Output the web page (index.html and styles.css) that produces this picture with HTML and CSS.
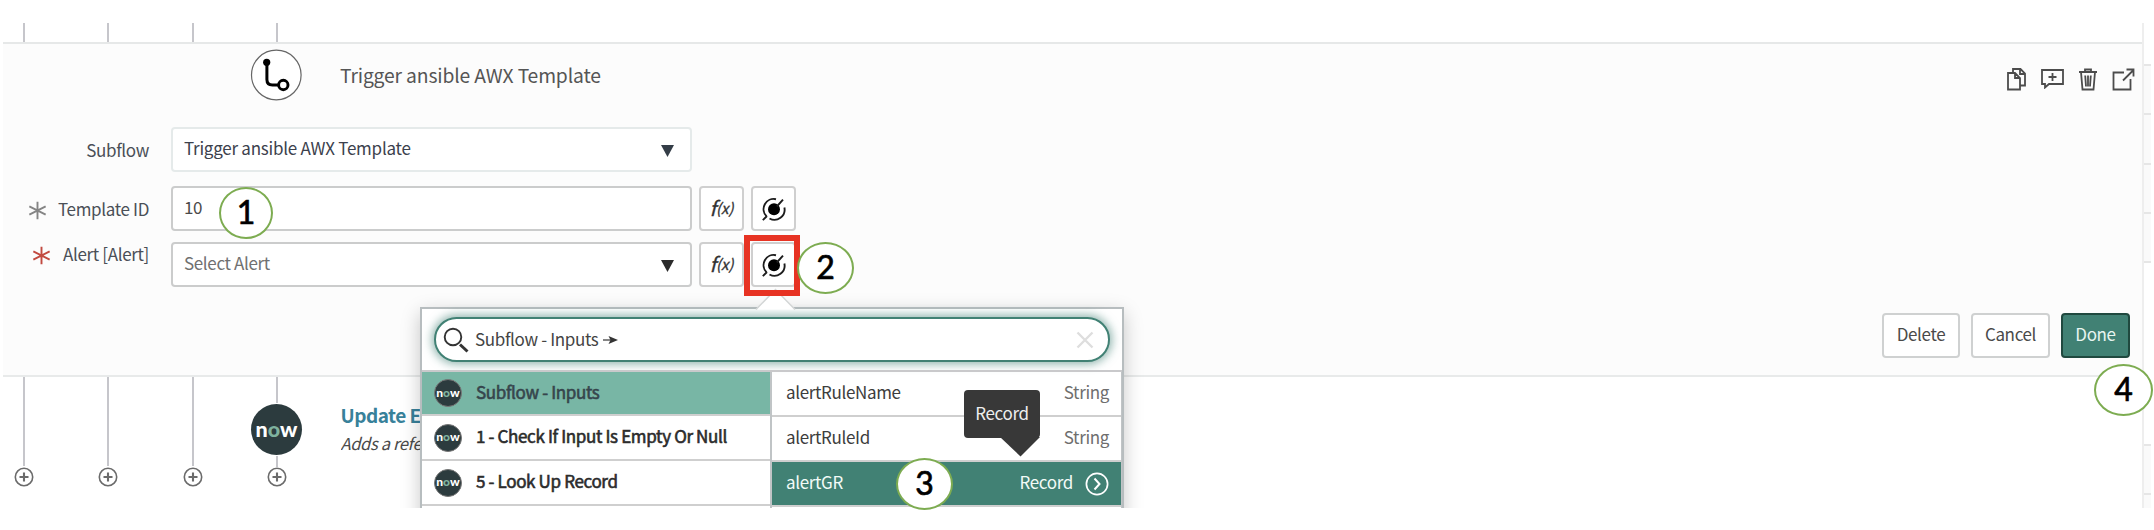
FILE: index.html
```html
<!DOCTYPE html>
<html lang="en">
<head>
<meta charset="utf-8">
<title>Flow Designer</title>
<link rel="stylesheet" href="styles.css">
</head>
<body>
<svg class="defs" width="0" height="0">
  <symbol id="pill" viewBox="0 0 24 24">
    <circle cx="12" cy="12.3" r="6" fill="#000"/>
    <path d="M14 2.2A10.2 10.2 0 0 0 4.6 19.4M22.4 10.500A10.2 10.2 0 0 1 7.500 21.500M14.8 9.5L21 2.6M.8 23.2L5 19" fill="none" stroke="#1c1c1c" stroke-width="1.9"/>
  </symbol>
  <symbol id="star" viewBox="0 0 20 20">
    <path d="M10 .8V19.2M1.4 5.6L18.6 14.4M1.4 14.4L18.6 5.6" fill="none" stroke="currentColor" stroke-width="2"/>
  </symbol>
  <symbol id="plus" viewBox="0 0 20 20">
    <circle cx="10" cy="10" r="8.7" fill="#fff" stroke="#6b6b6b" stroke-width="1.6"/>
    <path d="M10 5.5V14.5M5.5 10H14.5" stroke="#6b6b6b" stroke-width="2.1"/>
  </symbol>
</svg>
<main class="page">
  <div class="rails rails-top"><i></i><i></i><i></i><i></i></div>
  <section class="panel">
    <header class="head">
      <span class="flow-icon"><svg width="52" height="52" viewBox="0 0 52 52"><circle cx="26.300" cy="26" r="24.800" fill="#fff" stroke="#666" stroke-width="1.2"/><circle cx="16.7" cy="13.3" r="3.6"/><path d="M16.900 13V30.500Q16.900 36 22.400 36H28" fill="none" stroke="#000" stroke-width="3"/><circle cx="33.300" cy="36" r="4.700" fill="#fff" stroke="#000" stroke-width="2.900"/></svg></span>
      <h1 class="title">Trigger ansible AWX Template</h1>
      <div class="tools">
        <svg width="20" height="23" viewBox="0 0 20 23"><path d="M1 5H8L13 10V21.500H1ZM8 5V10H13M6 4.500V1H13.500L18 5.500V17.500H13.500M13 1.500V6H17.500" /></svg>
        <svg class="chat" width="23" height="20" viewBox="0 0 23 20"><path d="M1 1H22V15H8L4 18.500V15H1ZM11.500 4V12M7.500 8H15.500"/></svg>
        <svg width="20" height="23" viewBox="0 0 20 23"><path d="M1 4H19M7 4V1.500H13V4M3 4L4.500 21.500H15.500L17 4M7.200 7.500L8 18.500M10 7.500V18.500M12.800 7.500L12 18.500"/></svg>
        <svg width="23" height="23" viewBox="0 0 23 23"><path d="M12 4.500H1.500V21.500H18.500V11M11 12.500L21.500 2M14.500 1.500H21.500V8.500"/></svg>
      </div>
    </header>
    <div class="form">
      <div class="row row-sub"><label>Subflow</label><div class="field light dark">Trigger ansible AWX Template<b class="caret"></b></div></div>
      <div class="row row-id"><svg class="star" width="19" height="19"><use href="#star"/></svg><label>Template ID</label><div class="field">10</div><span class="btn fx">f<small>(x)</small></span><span class="btn"><svg width="24" height="24"><use href="#pill"/></svg></span></div>
      <div class="row row-alert"><svg class="star red" width="19" height="19"><use href="#star"/></svg><label>Alert [Alert]</label><div class="field ph">Select Alert<b class="caret black"></b></div><span class="btn fx">f<small>(x)</small></span><span class="btn"><svg width="24" height="24"><use href="#pill"/></svg></span></div>
    </div>
    <footer class="actions"><button class="b-del">Delete</button><button class="b-can">Cancel</button><button class="done">Done</button></footer>
  </section>
  <section class="next">
    <div class="col"><i></i><svg width="20" height="20"><use href="#plus"/></svg></div>
    <div class="col"><i></i><svg width="20" height="20"><use href="#plus"/></svg></div>
    <div class="col"><i></i><svg width="20" height="20"><use href="#plus"/></svg></div>
    <div class="col node"><i class="s1"></i><span class="now">n<em>o</em>w</span><i class="s2"></i><svg width="20" height="20"><use href="#plus"/></svg></div>
    <div class="step"><strong>Update E</strong><p>Adds a refe</p></div>
  </section>
  <aside class="side"><i class="blank"></i><i></i><i></i><i></i><i></i><i class="blank tall"></i><i></i></aside>

  <div class="clip"><div class="picker">
    <svg class="notch" width="42" height="22" viewBox="0 0 42 22"><path d="M1 21.500L20.500 1.500L40 21.500" fill="#fff" stroke="#d3d6d6" stroke-width="1.500"/></svg>
    <div class="search">
      <svg width="26" height="26" viewBox="0 0 26 26"><circle cx="10" cy="10" r="8.300" fill="none" stroke="#333" stroke-width="1.900"/><path d="M17 17.500L24.500 24.500" stroke="#333" stroke-width="3"/></svg>
      <span class="q">Subflow - Inputs</span>
      <svg class="arrow" width="15" height="8" viewBox="0 0 15 8"><path d="M0 4H8" stroke="#333" stroke-width="1.200"/><path d="M5.500 0L15 4L5.500 8L7.500 4Z" fill="#333"/></svg>
      <svg class="x" width="18" height="18" viewBox="0 0 18 18"><path d="M1.500 1.500L16.500 16.500M16.500 1.500L1.500 16.500" stroke="#dedede" stroke-width="2.400"/></svg>
    </div>
    <div class="lists">
      <ul class="left">
        <li class="sel"><span class="now sm">n<em>o</em>w</span><span>Subflow - Inputs</span></li>
        <li><span class="now sm">n<em>o</em>w</span><span>1 - Check If Input Is Empty Or Null</span></li>
        <li><span class="now sm">n<em>o</em>w</span><span>5 - Look Up Record</span></li>
        <li></li>
      </ul>
      <ul class="right">
        <li><span>alertRuleName</span><span class="ty">String</span></li>
        <li><span>alertRuleId</span><span class="ty">String</span></li>
        <li class="on"><span>alertGR</span><span class="ty">Record</span><svg width="24" height="24" viewBox="0 0 24 24"><path d="M9.500 6.500L14.500 12L9.500 17.500" fill="none" stroke="#fff" stroke-width="2"/><circle cx="12" cy="12" r="10.600" fill="none" stroke="#fff" stroke-width="1.700"/></svg></li>
        <li></li>
      </ul>
    </div>
    <div class="tip">Record<svg width="40" height="20" viewBox="0 0 40 20"><path d="M0 0H40L20.500 19.500Z" fill="#383838"/></svg></div>
  </div></div>
  <span class="frame"></span>
  <span class="mark m1">1</span>
  <span class="mark m2">2</span>
  <span class="mark m3">3</span>
  <span class="mark m4">4</span>
</main>
</body>
</html>
```
FILE: styles.css
```css
* { box-sizing: border-box; }
body { margin: 0; background: #fff; font: 17px/24px "Noto Sans CJK SC", "Noto Sans", sans-serif; letter-spacing: -.35px; color: #4a4a4a; }
.defs { position: absolute; }
svg { display: block; flex: none; }
.page { position: relative; width: 2154px; height: 530px; overflow: hidden; display: grid; grid-template: 42px 335px 153px / 2142px 12px; }
.rails { grid-column: 1; display: flex; align-items: flex-end; gap: 82.500px; padding-left: 22.500px; }
.rails i { width: 2px; height: 19px; background: #c6c6cb; }
.panel { grid-column: 1; margin-left: 3px; background: #fcfcfc; border-top: 2px solid #e6e8e8; border-bottom: 2px solid #e8eaea; }
.head { height: 80px; display: flex; padding-left: 247px; }
.flow-icon { margin-top: 5px; width: 52px; height: 52px; }
.title { margin: 18.500px 0 0 38px; font-weight: 400; font-size: 19.300px; line-height: 24px; letter-spacing: -.15px; color: #555; white-space: nowrap; }
.tools { margin: 24px 7px 0 auto; display: flex; gap: 14px; }
.tools svg { fill: none; stroke: #4c4c4c; stroke-width: 1.800; }
.tools .chat { margin-top: 1px; }
.form { height: 186px; padding-top: 3px; }
.row { position: relative; display: flex; width: 770px; height: 45px; margin-left: 25px; }
.row label { width: 121px; margin: 11px 22px 0 0; text-align: right; white-space: nowrap; color: #4a4f57; }
.row-alert label { margin-top: 0; }
.row-sub { height: 59px; }
.row-id { height: 56px; }
.star { position: absolute; left: 0; top: 15px; color: #858585; }
.star.red { left: 4px; top: 4px; color: #c24a40; }
.field { width: 521px; height: 45px; border: 2px solid #cbcccc; border-radius: 4px; background: #fff; padding: 7px 12px 7px 11px; display: flex; justify-content: space-between; white-space: nowrap; }
.field.light { border-color: #e5eaea; }
.dark { color: #3c414d; letter-spacing: -.25px; }
.ph { color: #707070; }
.caret { margin: 9px 4px 0 0; width: 13px; height: 12px; background: #343d47; clip-path: polygon(0 0, 100% 0, 50% 100%); }
.caret.black { background: #2b2b2b; }
.btn { width: 45px; height: 45px; margin-left: 7px; border: 2px solid #cfcfcf; border-radius: 4px; background: #fff; display: flex; justify-content: center; align-items: center; }
.fx { padding-bottom: 2px; font-style: italic; font-size: 20px; letter-spacing: 0; color: #333; -webkit-text-stroke: .3px #333; }
.fx small { font-size: 15px; }
.actions { display: flex; justify-content: flex-end; gap: 11px; padding: 3px 12px 0 0; }
.actions button { height: 45px; padding: 0 0 3px; border: 2px solid #cfd1d1; border-radius: 4px; background: #fff; font: inherit; letter-spacing: inherit; color: #4a4a4a; }
.actions .b-del { width: 78px; }
.actions .b-can { width: 79px; }
.actions .done { width: 69px; background: #418174; border-color: #20493f; color: #e8f5f0; }

.next { grid-column: 1; display: flex; padding-left: 13.500px; }
.col { width: 84.500px; flex: none; display: flex; flex-direction: column; align-items: flex-start; }
.col i { width: 2px; height: 89px; margin-left: 9px; background: #c6c6cb; margin-bottom: 1px; }
.node.node { width: 73.500px; }
.node .s1 { height: 26px; }
.node .s2 { height: 11px; margin-bottom: 0; margin-top: 1px; }
.now { width: 51px; height: 51px; margin-left: -16px; padding-bottom: 1px; border-radius: 50%; background: #2c3b3e; color: #fff; display: flex; justify-content: center; align-items: center; font: 900 21.500px/20px Lato, sans-serif; letter-spacing: 0; }
.now em { font-style: normal; color: #7fb29e; }
.step { white-space: nowrap; width: 80px; overflow: hidden; }
.step strong { display: block; margin-top: 26px; font-size: 19px; font-weight: 700; letter-spacing: -.5px; color: #38819a; }
.step p { margin: 4px 0 0; font-style: italic; font-size: 16.500px; }

.side { grid-area: 1 / 2 / 4 / 3; margin: 23px 3px 22px 0; border-left: 2px solid #eee; background: #fafafa; overflow: hidden; }
.side i { display: block; height: 49.300px; border-bottom: 2px solid #e6e6e6; }
.side .blank { height: 43px; background: #fff; }
.side .tall { height: 183px; }

.clip { position: absolute; left: 380px; top: 280px; width: 780px; height: 228px; overflow: hidden; }
.picker { position: absolute; left: 40px; top: 27px; width: 704px; height: 230px; border: 2px solid #b7bdbf; background: #fff; box-shadow: 0 6px 18px rgba(0,0,0,.22); }
.notch { position: absolute; left: 333px; top: -21px; }
.search { margin: 8px 12px; height: 45px; border: 2px solid #418174; border-radius: 23px; background: #fff; box-shadow: 0 0 10px 2px rgba(65,129,116,.6); display: flex; align-items: center; padding: 0 14px 0 7px; color: #444; }
.q { margin: 0 0 1px 6px; }
.arrow { margin-left: 5px; }
.x { margin-left: auto; }
.lists { display: flex; border-top: 2px solid #c9c9cb; height: 160px; }
ul { list-style: none; margin: 0; padding: 0; }
.left { width: 350px; border-right: 2px solid #c0c4c6; }
.right { flex: 1; border-right: 1px solid #c0c4c6; }
li { display: flex; align-items: center; height: 45px; border-bottom: 2px solid #cfcfcf; color: #3d3d3d; white-space: nowrap; }
li span:not(.now) { margin-bottom: 3px; }
.left li { padding-left: 12px; color: #2c2c2c; -webkit-text-stroke: .6px currentColor; }
.left .sel { height: 44px; background: #78b6a5; color: #36454c; }
.right li { padding: 0 12px 0 14px; }
.ty { margin-left: auto; color: #6e6e6e; }
.on.on, .on .ty { background: #418174; color: #f2fbf7; }
.on svg { margin-left: 12px; }
.now.sm { width: 28px; height: 28px; margin: 0 14px 0 0; font-size: 12px; line-height: 12px; border: 1px solid #777; -webkit-text-stroke: 0; }
.tip { position: absolute; left: 542px; top: 81px; width: 76px; height: 48px; border-radius: 4px; background: #383838; color: #eee; text-align: center; line-height: 45px; }
.tip svg { position: absolute; left: 36px; top: 47px; }

.frame { position: absolute; left: 744px; top: 235px; width: 56px; height: 61px; border: 6px solid #e73323; }
.mark { position: absolute; width: 57px; height: 52px; border: 2px solid #7dac51; border-radius: 50%; background: #fff; color: #000; font: 32px/46px Lato, sans-serif; letter-spacing: 0; text-align: center; -webkit-text-stroke: .7px #000; }
.m1 { left: 219px; top: 187px; width: 54px; }
.m2 { left: 797px; top: 242px; }
.m3 { left: 896px; top: 458px; }
.m4 { left: 2094px; top: 364px; width: 59px; }
```
